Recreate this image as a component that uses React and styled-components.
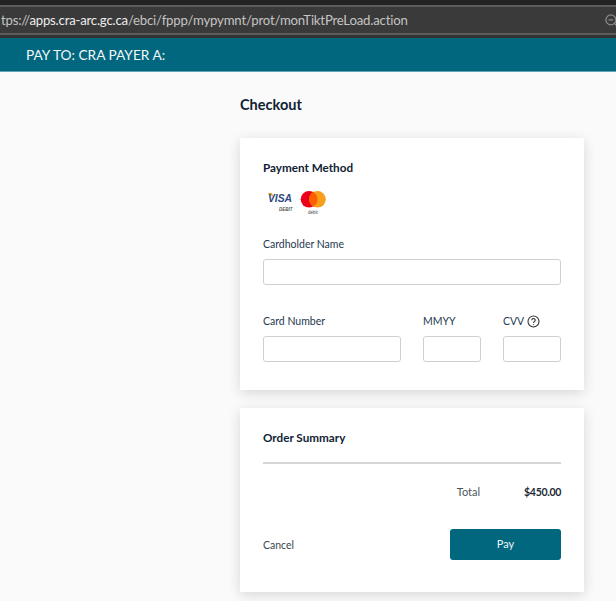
import React from "react";
import styled, { createGlobalStyle } from "styled-components";
import { ZoomOut } from "lucide-react";

const GlobalStyle = createGlobalStyle`
  html, body {
    margin: 0;
    padding: 0;
    background: #fafafa;
  }
  body {
    font-family: "Lato", "Liberation Sans", sans-serif;
    color: #1c2b3a;
  }
`;

const Page = styled.div`
  width: 616px;
  height: 601px;
  overflow: hidden;
`;

const BrowserBar = styled.div`
  height: 38px;
  box-sizing: border-box;
  background: #3a3a3a;
  border-top: 5px solid #232323;
  border-bottom: 3px solid #333;
  display: flex;
  flex-direction: column;
`;

const UrlRow = styled.div`
  flex: 1;
  display: flex;
  align-items: center;
  justify-content: space-between;
  border-top: 2px solid #5c5c5c;
  border-bottom: 2px solid #5c5c5c;
  overflow: hidden;
`;

const Url = styled.div`
  font-size: 13.2px;
  letter-spacing: -0.2px;
  color: #c4c4c4;
  margin-left: 1px;
  white-space: nowrap;
  b {
    font-weight: 400;
    color: #ececec;
  }
`;

const ZoomIcon = styled(ZoomOut)`
  color: #8a8a8a;
  margin-right: -3px;
  flex: none;
`;

const Banner = styled.header`
  height: 34px;
  background: #00677f;
  border-bottom: 1px solid #5fa3b3;
  box-sizing: border-box;
  display: flex;
  align-items: center;
  padding-left: 26px;
  color: #f2f7f8;
  font-size: 13.7px;
`;

const Main = styled.main`
  margin-left: 240px;
  width: 344px;
  display: flex;
  flex-direction: column;
`;

const PageTitle = styled.h1`
  margin: 22px 0 23px;
  font-size: 14.5px;
  line-height: 21px;
  font-weight: 700;
  color: #0f2233;
`;

const Card = styled.section`
  background: #fff;
  box-shadow: 0 3px 12px rgba(0, 0, 0, 0.14);
  padding: 21px 23px;
  margin-bottom: 18px;
  box-sizing: border-box;
  height: ${(p) => p.$height}px;
`;

const CardTitle = styled.h2`
  margin: 0;
  font-size: 11.7px;
  line-height: 16px;
  font-weight: 700;
  color: #0f2233;
`;

const Logos = styled.div`
  display: flex;
  gap: 3px;
  margin: 14px 0 0 3px;
  height: 28px;
`;

const Label = styled.label`
  display: flex;
  align-items: center;
  gap: 3px;
  height: 16px;
  font-size: 10.5px;
  color: #24384f;
`;

const Input = styled.input`
  display: block;
  box-sizing: border-box;
  width: ${(p) => p.$width};
  height: 26px;
  margin-top: 7px;
  border: 1px solid #cfcfcf;
  border-radius: 3px;
  background: #fff;
  padding: 0 6px;
`;

const Field = styled.div`
  margin-top: ${(p) => p.$top || 0}px;
`;

const FieldRow = styled.div`
  display: flex;
  gap: 22px;
  margin-top: 28px;
`;

const Rule = styled.hr`
  border: 0;
  border-top: 2px solid #d6d6d6;
  margin: 17px 0 0;
`;

const TotalRow = styled.div`
  display: flex;
  justify-content: flex-end;
  align-items: center;
  gap: 44px;
  margin-top: 20px;
  font-size: 11px;
  line-height: 16px;
  color: #4c5560;
`;

const Amount = styled.span`
  font-size: 10.5px;
  font-weight: 700;
  letter-spacing: -0.3px;
  color: #1d2a36;
`;

const Actions = styled.div`
  display: flex;
  align-items: center;
  justify-content: space-between;
  margin-top: 29px;
`;

const CancelLink = styled.a`
  font-size: 10.5px;
  color: #3b4652;
`;

const PayButton = styled.button`
  width: 111px;
  height: 31px;
  border: 0;
  border-radius: 3px;
  background: #00677f;
  color: #eef5f7;
  font-family: inherit;
  font-size: 11px;
  padding: 0 0 3px;
`;

const VisaLogo = () => (
  <svg width="30" height="28" viewBox="0 0 30 28">
    <path d="M1.5 4h4.5l1.4 4z" fill="#e8a530" />
    <text x="2" y="13" fontFamily="Liberation Sans" fontSize="10.3" fontWeight="700" fontStyle="italic" fill="#2a4a80">VISA</text>
    <text x="13" y="21.5" fontFamily="Liberation Sans" fontSize="4.5" fontWeight="700" fontStyle="italic" fill="#555">DEBIT</text>
  </svg>
);

const MastercardLogo = () => (
  <svg width="28" height="28" viewBox="0 0 28 28">
    <circle cx="10" cy="10.3" r="8.3" fill="#eb001b" />
    <circle cx="18.5" cy="10.3" r="8.3" fill="#f79e1b" />
    <path d="M14.25 3.1a8.3 8.3 0 0 1 0 14.4 8.3 8.3 0 0 1 0-14.4z" fill="#ff5f00" />
    <text x="9" y="24.5" fontFamily="Liberation Sans" fontSize="4.5" fill="#444">debit</text>
  </svg>
);

const HelpIcon = () => (
  <svg width="13" height="13" viewBox="0 0 13 13" fill="none" stroke="#333" strokeWidth="1.1">
    <circle cx="6.5" cy="6.5" r="5.5" />
    <path d="M4.8 5.2a1.7 1.7 0 1 1 2.6 1.4c-.6.4-.9.7-.9 1.3" />
    <path d="M6.5 9.3v.8" />
  </svg>
);

const App = () => {
  return (
    <Page>
      <GlobalStyle />
      <BrowserBar>
        <UrlRow>
          <Url>
            tps://<b>apps.cra-arc.gc.ca</b>/ebci/fppp/mypymnt/prot/monTiktPreLoad.action
          </Url>
          <ZoomIcon size={15} />
        </UrlRow>
      </BrowserBar>
      <Banner>PAY TO: CRA PAYER A:</Banner>
      <Main>
        <PageTitle>Checkout</PageTitle>
        <Card $height={252}>
          <CardTitle>Payment Method</CardTitle>
          <Logos>
            <VisaLogo />
            <MastercardLogo />
          </Logos>
          <Field $top={19}>
            <Label>Cardholder Name</Label>
            <Input $width="298px" />
          </Field>
          <FieldRow>
            <Field>
              <Label>Card Number</Label>
              <Input $width="138px" />
            </Field>
            <Field>
              <Label>MMYY</Label>
              <Input $width="58px" />
            </Field>
            <Field>
              <Label>
                CVV <HelpIcon />
              </Label>
              <Input $width="58px" />
            </Field>
          </FieldRow>
        </Card>
        <Card $height={184}>
          <CardTitle>Order Summary</CardTitle>
          <Rule />
          <TotalRow>
            <span>Total</span>
            <Amount>$450.00</Amount>
          </TotalRow>
          <Actions>
            <CancelLink>Cancel</CancelLink>
            <PayButton>Pay</PayButton>
          </Actions>
        </Card>
      </Main>
    </Page>
  );
};

export default App;
